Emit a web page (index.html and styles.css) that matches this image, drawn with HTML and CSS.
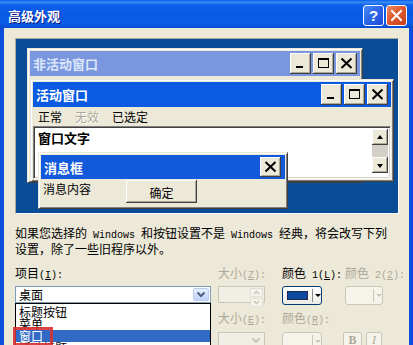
FILE: index.html
```html
<!DOCTYPE html>
<html lang="zh-CN">
<head>
<meta charset="utf-8">
<title>高级外观</title>
<link rel="stylesheet" href="styles.css">
</head>
<body>
<div class="window">
  <div class="titlebar">
    <span class="title">高级外观</span>
    <div class="caption-btns">
      <span class="cap-btn help">?</span>
      <span class="cap-btn close"><svg width="13" height="13" viewBox="0 0 13 13"><path d="M2 2 L11 11 M11 2 L2 11" stroke="#fff" stroke-width="2" stroke-linecap="square"/></svg></span>
    </div>
  </div>
  <div class="frame-body">
    <div class="client">
      <div class="preview">
        <div class="pwin inactive">
          <div class="ptitle">
            <span>非活动窗口</span>
            <div class="pbtns">
              <span class="cbtn"><svg width="21" height="21" viewBox="0 0 21 21"><rect x="6" y="13" width="7" height="2" fill="#000"/></svg></span>
              <span class="cbtn"><svg width="21" height="21" viewBox="0 0 21 21"><rect x="5.5" y="5.5" width="10" height="9" fill="none" stroke="#000"/><rect x="5" y="5" width="11" height="2" fill="#000"/></svg></span>
              <span class="cbtn"><svg width="21" height="21" viewBox="0 0 21 21"><path d="M5.5 5.5 L15.5 15 M15.5 5.5 L5.5 15" stroke="#000" stroke-width="2"/></svg></span>
            </div>
          </div>
        </div>
        <div class="pwin active">
          <div class="ptitle">
            <span>活动窗口</span>
            <div class="pbtns">
              <span class="cbtn"><svg width="21" height="21" viewBox="0 0 21 21"><rect x="6" y="13" width="7" height="2" fill="#000"/></svg></span>
              <span class="cbtn"><svg width="21" height="21" viewBox="0 0 21 21"><rect x="5.5" y="5.5" width="10" height="9" fill="none" stroke="#000"/><rect x="5" y="5" width="11" height="2" fill="#000"/></svg></span>
              <span class="cbtn"><svg width="21" height="21" viewBox="0 0 21 21"><path d="M5.5 5.5 L15.5 15 M15.5 5.5 L5.5 15" stroke="#000" stroke-width="2"/></svg></span>
            </div>
          </div>
          <div class="pmenu">
            <span>正常</span>
            <span class="dis">无效</span>
            <span>已选定</span>
          </div>
          <div class="ptext">
            <span class="wtext">窗口文字</span>
            <div class="vscroll">
              <span class="sbtn"><svg width="14" height="14" viewBox="0 0 14 14"><path d="M7 5 L10 9 L4 9 Z" fill="#000"/></svg></span>
              <span class="strack"></span>
              <span class="sbtn"><svg width="14" height="14" viewBox="0 0 14 14"><path d="M4 6 L10 6 L7 10 Z" fill="#000"/></svg></span>
            </div>
          </div>
        </div>
        <div class="pwin msgbox">
          <div class="ptitle">
            <span>消息框</span>
            <div class="pbtns">
              <span class="cbtn small"><svg width="21" height="20" viewBox="0 0 21 20"><path d="M5.5 5 L15.5 14.5 M15.5 5 L5.5 14.5" stroke="#000" stroke-width="2"/></svg></span>
            </div>
          </div>
          <div class="msgbody">
            <span class="msgtext">消息内容</span>
            <span class="okbtn">确定</span>
          </div>
        </div>
      </div>

      <p class="desc">如果您选择的<span class="lat"> Windows </span>和按钮设置不是<span class="lat"> Windows </span>经典，将会改写下列<br>设置，除了一些旧程序以外。</p>

      <div class="form">
        <span class="lbl">项目<span class="lat">(<u>I</u>):</span></span>
        <span class="lbl dis">大小<span class="lat">(<u>Z</u>):</span></span>
        <span class="lbl">颜色<span class="lat"> 1(<u>L</u>):</span></span>
        <span class="lbl dis nowrap">颜色<span class="lat"> 2(<u>2</u>):</span></span>

        <div class="combo-wrap">
          <div class="combo">
            <span>桌面</span>
            <span class="dd-btn"><svg width="14" height="11" viewBox="0 0 14 11"><path d="M3.5 3.5 L7 7 L10.5 3.5" fill="none" stroke="#4D6185" stroke-width="2"/></svg></span>
          </div>
          <div class="dlist">
            <div class="item">标题按钮</div>
            <div class="item">菜单</div>
            <div class="item sel">窗口</div>
            <div class="item">活动标题</div>
            <span class="mark"></span>
          </div>
        </div>
        <div class="spin dis-box">
          <span class="spin-btns">
            <span class="sp"><svg width="11" height="7" viewBox="0 0 11 7"><path d="M3 5 L5.5 2.5 L8 5" fill="none" stroke="#C9C7BA" stroke-width="1.5"/></svg></span>
            <span class="sp"><svg width="11" height="7" viewBox="0 0 11 7"><path d="M3 2 L5.5 4.5 L8 2" fill="none" stroke="#C9C7BA" stroke-width="1.5"/></svg></span>
          </span>
        </div>
        <div class="colorbtn">
          <span class="swatch"></span>
          <span class="sep"></span>
          <span class="arrow"></span>
        </div>
        <div class="colorbtn disabled narrow">
          <span class="swatch empty"></span>
          <span class="sep"></span>
          <span class="arrow"></span>
        </div>

        <span class="cell-empty"></span>
        <span class="lbl dis">大小<span class="lat">(<u>E</u>):</span></span>
        <span class="lbl dis">颜色<span class="lat">(<u>R</u>):</span></span>
        <span class="cell-empty"></span>

        <span class="cell-empty"></span>
        <div class="spin dis-box">
          <span class="dd-dis"><svg width="14" height="11" viewBox="0 0 14 11"><path d="M3.5 3.5 L7 7 L10.5 3.5" fill="none" stroke="#C9C7BA" stroke-width="2"/></svg></span>
        </div>
        <div class="colorbtn disabled low">
          <span class="swatch empty"></span>
          <span class="sep"></span>
          <span class="arrow"></span>
        </div>
        <div class="fontbtns">
          <span class="fbtn bold">B</span>
          <span class="fbtn ital">I</span>
        </div>
      </div>
    </div>
  </div>
</div>
</body>
</html>
```
FILE: styles.css
```css
* { box-sizing: border-box; margin: 0; padding: 0; }
html, body { width: 413px; height: 345px; overflow: hidden; }
body {
  font-family: "Noto Sans CJK SC", "Noto Sans", sans-serif;
  font-size: 12px;
  color: #000;
  background: #ECE9D8;
}
.lat { font-family: "Liberation Mono", monospace; font-size: 10px; }
.nowrap { white-space: nowrap; }

.window { width: 413px; height: 345px; display: flex; flex-direction: column; }

.titlebar {
  height: 28px;
  flex: none;
  display: flex;
  align-items: center;
  justify-content: space-between;
  padding: 3px 6px 0 8px;
  background: linear-gradient(#0a5de6 0%, #3a8cf8 8%, #0c60ea 18%, #0858e2 50%, #0a5ce6 85%, #0849d2 100%);
}
.title {
  color: #fff;
  font-weight: bold;
  font-size: 13px;
  line-height: 16px;
  text-shadow: 1px 1px #0a1a80;
}
.caption-btns { display: flex; gap: 2px; }
.cap-btn {
  width: 21px; height: 21px;
  border: 1px solid #fff;
  border-radius: 3px;
  display: flex; align-items: center; justify-content: center;
  color: #fff;
}
.help {
  background: linear-gradient(135deg, #4c8bf5 0%, #2d68ea 45%, #1a4bd6 100%);
  font-family: "Liberation Sans", sans-serif;
  font-weight: bold;
  font-size: 15px;
  line-height: 19px;
}
.close {
  background: linear-gradient(135deg, #ea8a64 0%, #e0582e 45%, #c8401c 100%);
}

.frame-body {
  flex: 1;
  border-left: 4px solid #0b4fdc;
  border-right: 4px solid #0b4fdc;
  overflow: hidden;
}
.client { padding: 10px 0 0 11px; }

/* preview desktop */
.preview {
  position: relative;
  width: 384px;
  height: 176px;
  border: 1px solid;
  border-color: #ACA899 #fff #fff #ACA899;
  background: #0b4c97;
}
.pwin {
  position: absolute;
  background: #ECE9D8;
  border: 1px solid;
  border-color: #ECE9D8 #404040 #404040 #ECE9D8;
  box-shadow: inset 1px 1px #fff, inset -1px -1px #808080;
  padding: 2px;
  display: flex;
  flex-direction: column;
}
.inactive { left: 11px; top: 9px; width: 336px; height: 135px; }
.active { left: 14px; top: 40px; width: 364px; height: 103px; }
.msgbox { left: 22px; top: 113px; width: 250px; height: 57px; }

.ptitle {
  height: 25px;
  flex: none;
  display: flex;
  align-items: center;
  justify-content: space-between;
  padding: 0 3px;
  font-weight: bold;
  font-size: 13px;
  color: #fff;
  background: #0b5be2;
}
.inactive .ptitle { background: #7a96df; color: #dce6fa; }
.msgbox .ptitle { height: 24px; padding-right: 4px; background: #1359dc; }
.pbtns { display: flex; gap: 2px; }
.cbtn {
  width: 21px; height: 21px;
  display: block;
  background: #ECE9D8;
  box-shadow: inset -1px -1px #404040, inset 1px 1px #fff, inset -2px -2px #ACA899;
}
.cbtn svg { display: block; }
.cbtn.small { height: 20px; }

.pmenu {
  height: 19px;
  flex: none;
  display: flex;
  align-items: center;
  gap: 13px;
  padding-left: 5px;
  line-height: 14px;
}
.pmenu .dis { color: #ACA899; text-shadow: 1px 1px #fff; }

.ptext {
  height: 53px;
  background: #fff;
  border: 1px solid;
  border-color: #808080 #fff #fff #808080;
  box-shadow: inset 1px 1px #404040, inset -1px -1px #D4D0C8;
  padding: 2px 2px 0 4px;
  display: flex;
  justify-content: space-between;
  align-items: flex-start;
}
.wtext { font-weight: bold; font-size: 13px; line-height: 16px; margin-top: 1px; }
.vscroll { width: 16px; height: 44px; display: flex; flex-direction: column; }
.sbtn {
  width: 16px; height: 16px;
  display: flex; align-items: center; justify-content: center;
  background: #ECE9D8;
  box-shadow: inset -1px -1px #404040, inset 1px 1px #fff, inset -2px -2px #ACA899;
}
.strack { flex: 1; background: #D4D0C8; }

.msgbody {
  flex: 1;
  display: flex;
  align-items: flex-start;
  padding-left: 2px;
  gap: 35px;
}
.msgtext { margin-top: 3px; line-height: 14px; }
.okbtn {
  width: 71px; height: 23px;
  margin-top: 1px;
  display: flex; align-items: center; justify-content: center;
  padding-top: 2px;
  background: #ECE9D8;
  box-shadow: inset -1px -1px #404040, inset 1px 1px #fff, inset -2px -2px #ACA899;
}

.desc {
  margin-top: 12px;
  line-height: 13px;
  white-space: nowrap;
}

/* form */
.form {
  margin-top: 11px;
  display: grid;
  grid-template-columns: 203px 64px 63px 1fr;
  grid-template-rows: 20px 25px 21px 17px;
  align-items: start;
}
.lbl { line-height: 14px; white-space: nowrap; }
.lbl.dis { color: #ACA899; }

.combo-wrap { position: relative; width: 196px; }
.combo {
  height: 17px;
  border: 1px solid #7F9DB9;
  background: #fff;
  display: flex;
  align-items: center;
  justify-content: space-between;
  padding: 1px 1px 1px 3px;
  line-height: 14px;
}
.dd-btn {
  width: 16px; height: 13px;
  border: 1px solid #B9CBF3;
  border-radius: 2px;
  background: linear-gradient(#E6EEFC, #C1D3FB);
  display: flex; align-items: center; justify-content: center;
}
.dlist {
  position: absolute;
  left: 0; top: 17px;
  width: 196px;
  height: 60px;
  border: 1px solid #000;
  background: #fff;
  padding-top: 2px;
}
.item { height: 12px; line-height: 12px; padding-left: 3px; overflow: visible; }
.item.sel { background: #316AC5; color: #fff; }
.mark {
  position: absolute;
  left: -3px; top: 23px;
  width: 40px; height: 19px;
  border: 3px solid rgba(214, 50, 50, 0.9);
}

.dis-box {
  width: 47px; height: 17px;
  border: 1px solid #C9C7BA;
  background: #F0EFE6;
  display: flex;
  justify-content: flex-end;
  align-items: stretch;
  padding: 1px;
}
.spin-btns { width: 13px; display: flex; flex-direction: column; gap: 1px; }
.sp { flex: 1; display: flex; align-items: center; justify-content: center; background: #F4F3EE; border: 1px solid #E2E0D4; }
.dd-dis { width: 15px; display: flex; align-items: center; justify-content: center; }

.colorbtn {
  width: 40px; height: 19px;
  border: 1px solid #003C74;
  border-radius: 3px;
  background: linear-gradient(#fff, #ECEBE6);
  display: flex;
  align-items: center;
  padding-left: 4px;
}
.colorbtn.narrow { width: 38px; }
.colorbtn.low { width: 40px; }
.swatch { width: 21px; height: 9px; background: #0b4a9e; border: 1px solid #1a2a50; }
.swatch.empty { background: transparent; border-color: transparent; }
.sep { width: 1px; height: 13px; background: #8C8C8C; margin-left: 4px; }
.arrow {
  width: 0; height: 0;
  margin-left: 2px;
  border-left: 3px solid transparent;
  border-right: 3px solid transparent;
  border-top: 3px solid #000;
}
.colorbtn.disabled { border-color: #C9C7BA; background: #F5F4EA; }
.colorbtn.disabled .sep { background: #C9C7BA; }
.colorbtn.disabled .arrow { border-top-color: #C9C7BA; }

.fontbtns { display: flex; gap: 4px; margin-left: -2px; }
.fbtn {
  width: 19px; height: 17px;
  border: 1px solid #C9C7BA;
  border-radius: 2px;
  background: #F5F4EA;
  color: #ACA899;
  display: flex; align-items: center; justify-content: center;
  font-family: "Liberation Serif", serif;
  font-size: 12px;
}
.fbtn.bold { font-weight: bold; }
.fbtn.ital { font-style: italic; width: 16px; }
```
